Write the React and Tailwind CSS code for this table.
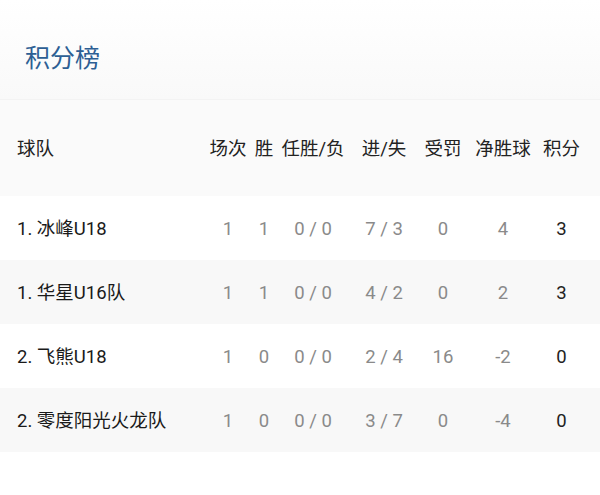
import React from 'react';

const teams = [
  { name: '1. 冰峰U18', played: 1, won: 1, draw: '0 / 0', goals: '7 / 3', penalty: 0, diff: 4, points: 3 },
  { name: '1. 华星U16队', played: 1, won: 1, draw: '0 / 0', goals: '4 / 2', penalty: 0, diff: 2, points: 3 },
  { name: '2. 飞熊U18', played: 1, won: 0, draw: '0 / 0', goals: '2 / 4', penalty: 16, diff: -2, points: 0 },
  { name: '2. 零度阳光火龙队', played: 1, won: 0, draw: '0 / 0', goals: '3 / 7', penalty: 0, diff: -4, points: 0 },
];

const Cells = ({ cells, muted }) => (
  <>
    <div className={`w-[38px] flex justify-center whitespace-nowrap ${muted}`}>{cells[0]}</div>
    <div className={`w-[34px] flex justify-center whitespace-nowrap ${muted}`}>{cells[1]}</div>
    <div className={`w-[64px] flex justify-center whitespace-nowrap ${muted}`}>{cells[2]}</div>
    <div className={`w-[78px] flex justify-center whitespace-nowrap ${muted}`}>{cells[3]}</div>
    <div className={`w-[40px] flex justify-center whitespace-nowrap ${muted}`}>{cells[4]}</div>
    <div className={`w-[80px] flex justify-center whitespace-nowrap ${muted}`}>{cells[5]}</div>
    <div className="w-[37px] flex justify-center whitespace-nowrap">{cells[6]}</div>
  </>
);

export default function App() {
  return (
    <div className="w-[600px] h-[495px] bg-white font-['Roboto','Noto_Sans_CJK_SC',sans-serif] text-[18.5px] text-[#222]">
      {/* Title */}
      <div className="h-[100px] flex items-center pl-[25px] pt-[18px] bg-gradient-to-b from-white to-[#f9f9f9] border-b border-[#f3f3f3]">
        <h1 className="text-[25px] text-[#2d5f94] leading-none">积分榜</h1>
      </div>

      {/* Header */}
      <div className="h-[96px] flex items-center bg-[#fafafa] pr-[20px] pt-[4px]">
        <div className="flex-1 pl-[17px]">球队</div>
        <Cells cells={['场次', '胜', '任胜/负', '进/失', '受罚', '净胜球', '积分']} muted="" />
      </div>

      {/* Rows */}
      {teams.map((t, i) => (
        <div key={i} className={`h-[64px] flex items-center pr-[20px] pt-[3px] ${i % 2 === 1 ? 'bg-[#f8f8f8]' : 'bg-white'}`}>
          <div className="flex-1 pl-[17px] text-[#1a1a1a]">{t.name}</div>
          <Cells cells={[t.played, t.won, t.draw, t.goals, t.penalty, t.diff, t.points]} muted="text-[#8a8a8a]" />
        </div>
      ))}
    </div>
  );
}
